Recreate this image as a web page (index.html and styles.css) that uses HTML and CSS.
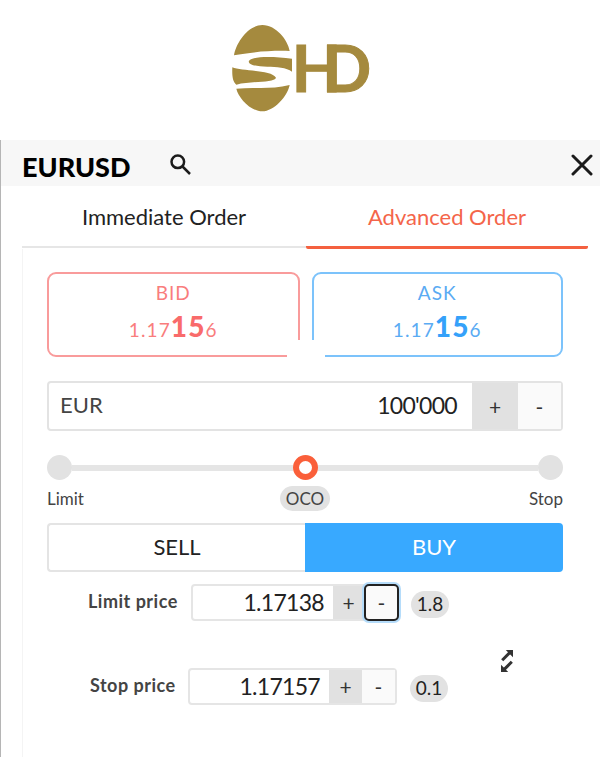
FILE: index.html
```
<!DOCTYPE html>
<html lang="en">
<head>
    <meta charset="UTF-8">
    <meta name="viewport" content="width=device-width, initial-scale=1.0">
    <title>EURUSD - Advanced Order</title>
    <link rel="stylesheet" href="styles.css">
</head>
<body>

    <div class="brand">
        <svg class="logo" viewBox="0 0 480 315" fill="#a58a3e">
            <path d="M42 121 C48 84 84 30 127 30 C169 30 204 76 209 108 C150 106 88 112 42 121Z"/>
            <path d="M86 140 C91 123 155 123 216 131 V170 C200 157 169 155 142 155 C114 155 88 151 86 140Z"/>
            <path d="M37 157 C64 169 154 164 168 188 C163 204 95 197 49 209 C37 201 36 178 37 157Z"/>
            <path d="M49 221 C103 215 152 225 209 210 C203 243 162 289 127 289 C91 289 55 248 49 221Z"/>
            <text class="logo-text" x="215" y="232">HD</text>
        </svg>
    </div>

    <div class="panel">
        <div class="panel-header">
            <h2>EURUSD</h2>
            <svg class="search" viewBox="0 0 22 22">
                <circle cx="7.8" cy="7.8" r="6.3"/>
                <path d="M12.5 12.5 L20 20"/>
            </svg>
            <svg class="close" viewBox="0 0 22 22">
                <path d="M2 2 L20 20 M20 2 L2 20"/>
            </svg>
        </div>

        <div class="tabs">
            <div class="tab"><span>Immediate Order</span></div>
            <div class="tab active"><span>Advanced Order</span></div>
        </div>

        <div class="content">
            <!-- Bid / ask prices -->
            <div class="quotes">
                <div class="quote bid">
                    <div class="side">BID</div>
                    <div class="price">1.17<b>15</b>6</div>
                </div>
                <div class="quote ask">
                    <div class="side">ASK</div>
                    <div class="price">1.17<b>15</b>6</div>
                </div>
                <div class="notch"></div>
            </div>

            <div class="amount">
                <span class="currency">EUR</span>
                <span class="value">100'000</span>
                <button class="plus">+</button>
                <button class="minus">-</button>
            </div>

            <!-- Order type slider -->
            <div class="slider">
                <div class="dot"></div>
                <div class="line"></div>
                <div class="dot selected"></div>
                <div class="line"></div>
                <div class="dot"></div>
            </div>
            <div class="slider-labels">
                <span>Limit</span>
                <span class="pill">OCO</span>
                <span class="right">Stop</span>
            </div>

            <div class="direction">
                <button class="sell">SELL</button>
                <button class="buy">BUY</button>
            </div>

            <div class="price-row limit">
                <label>Limit price</label>
                <div class="stepper">
                    <span class="value">1.17138</span>
                    <button class="plus">+</button>
                    <button class="minus focused">-</button>
                </div>
                <span class="pill">1.8</span>
            </div>

            <div class="swap">
                <svg viewBox="0 0 12 22">
                    <path class="shaft" d="M1.2 10.2 L9 2.4 M10.8 11.8 L3 19.6"/>
                    <path d="M4.8 0 H12 V7.2Z M0 14.8 V22 H7.2Z"/>
                </svg>
            </div>

            <div class="price-row stop">
                <label>Stop price</label>
                <div class="stepper">
                    <span class="value">1.17157</span>
                    <button class="plus">+</button>
                    <button class="minus">-</button>
                </div>
                <span class="pill">0.1</span>
            </div>
        </div>
    </div>

</body>
</html>
```
FILE: styles.css
```
* {
    box-sizing: border-box;
}
body {
    font-family: Lato, "Noto Sans", sans-serif;
    background-color: #fff;
    color: #222;
    margin: 0;
    height: 757px;
    overflow: hidden;
}
button {
    font-family: inherit;
    border: none;
    padding: 0;
    margin: 0;
    cursor: pointer;
}

/* Logo */
.brand {
    height: 140px;
    padding: 15px 0 0 220px;
}
.logo {
    display: block;
    width: 160px;
    height: 105px;
}
.logo-text {
    font-size: 193px;
    font-weight: bold;
    letter-spacing: -57px;
    stroke: #a58a3e;
    stroke-width: 3;
}

/* Panel */
.panel {
    height: 617px;
    border-left: 1px solid #b5b5b5;
}
.panel-header {
    display: flex;
    height: 46px;
    background-color: #f7f7f7;
    padding: 0 7px 0 21px;
}
.panel-header h2 {
    width: 148px;
    margin: 0;
    padding-top: 6px;
    font-size: 27px;
    line-height: 42px;
    font-weight: 900;
    color: #000;
}
.panel-header svg {
    fill: none;
    stroke: #1b1b1b;
}
.search {
    width: 22px;
    height: 22px;
    margin-top: 14px;
    stroke-width: 2.5;
}
.close {
    width: 22px;
    height: 22px;
    margin: 14px 0 0 auto;
    stroke-width: 3;
    stroke-linecap: round;
}

/* Tabs */
.tabs {
    display: flex;
    height: 63px;
    margin: 0 12px 0 21px;
}
.tab {
    width: 284px;
    height: 62px;
    border-bottom: 2px solid #e6e6e6;
    text-align: center;
    font-size: 22px;
    line-height: 62px;
}
.tab.active {
    width: 282px;
    height: 63px;
    color: #f4654a;
    border-bottom: 3px solid #f4603f;
    border-radius: 2px;
}

.content {
    height: 508px;
    margin-left: 21px;
    padding: 23px 37px 0 24px;
    border-left: 1px solid #f4f4f4;
}

/* Quotes */
.quotes {
    position: relative;
    display: flex;
    gap: 12px;
    height: 85px;
}
.quote {
    width: 253px;
    border: 2px solid #f99b9b;
    border-radius: 9px;
    text-align: center;
    color: #f97d7d;
}
.quote.ask {
    width: 252px;
    border-color: #7cc3fb;
    color: #5aabf3;
}
.side {
    margin-top: 7px;
    font-size: 19px;
    line-height: 24px;
    letter-spacing: 1px;
}
.price {
    font-size: 19px;
    line-height: 36px;
    margin-top: 3px;
    letter-spacing: 1.1px;
}
.price b {
    font-size: 28px;
    font-weight: 900;
    color: #f96b6b;
}
.ask .price b {
    color: #35a1fa;
}
/* clears the inner bottom corners of both boxes */
.notch {
    position: absolute;
    left: 240px;
    bottom: -1px;
    width: 38px;
    height: 18px;
    background-color: #fff;
}

/* Amount */
.amount {
    display: flex;
    height: 50px;
    margin-top: 24px;
    border: 2px solid #e3e3e3;
    border-radius: 4px;
    line-height: 44px;
    font-size: 23px;
}
.currency {
    padding-left: 11px;
    font-size: 22px;
    color: #444;
}
.value {
    flex: 1;
    text-align: right;
    padding-right: 15px;
    letter-spacing: -.7px;
}
.plus, .minus {
    width: 46px;
    background-color: #e1e1e1;
    color: #333;
    font-size: 21px;
}
.minus {
    width: 43px;
    background-color: #fafafa;
}

/* Slider */
.slider {
    display: flex;
    align-items: center;
    height: 25px;
    margin-top: 24px;
}
.dot {
    width: 25px;
    height: 25px;
    border-radius: 50%;
    background-color: #e2e2e2;
}
.dot.selected {
    background-color: #fff;
    border: 6px solid #fa5f3a;
}
.line {
    flex: 1;
    height: 6px;
    background-color: #e5e5e5;
}
.slider-labels {
    display: grid;
    grid-template-columns: 1fr 50px 1fr;
    height: 25px;
    margin-top: 6px;
    font-size: 17px;
    line-height: 25px;
    color: #444;
}
.right {
    text-align: right;
}
.pill {
    background-color: #e2e2e2;
    border-radius: 14px;
    text-align: center;
}

/* Sell / buy */
.direction {
    display: flex;
    height: 49px;
    margin-top: 12px;
}
.direction button {
    width: 259px;
    padding-bottom: 2px;
    font-size: 22px;
    background-color: #fff;
    border: 2px solid #e4e4e4;
    border-right: none;
    border-radius: 4px 0 0 4px;
    color: #222;
}
.direction .buy {
    background-color: #38a9ff;
    border: none;
    border-radius: 0 4px 4px 0;
    color: #fff;
}

/* Limit and stop prices */
.price-row {
    display: flex;
    align-items: center;
    height: 37px;
}
.price-row label {
    width: 90px;
    padding-bottom: 3px;
    font-size: 18px;
    letter-spacing: .5px;
    font-weight: bold;
    color: #444;
    white-space: nowrap;
}
.stepper {
    display: flex;
    width: 209px;
    height: 37px;
    border: 2px solid #e5e5e5;
    border-radius: 4px;
    font-size: 23px;
    line-height: 33px;
}
.stepper .value {
    padding-right: 9px;
}
.stepper .plus {
    width: 33px;
}
.stepper .minus {
    width: 33px;
}
.stepper .focused {
    width: 35px;
    height: 37px;
    margin: -2px -2px 0 0;
    border: 2px solid #222;
    border-radius: 5px;
    box-shadow: 0 0 0 2px #b5dcfa;
}
.price-row .pill {
    width: 38px;
    height: 27px;
    margin: 3px 0 0 12px;
    font-size: 19px;
    line-height: 26px;
    color: #222;
}
.limit {
    margin: 12px 0 0 41px;
}
.limit label {
    margin-right: 13px;
}
.limit .stepper {
    width: 208px;
}
.limit .plus {
    width: 31px;
}
.stop {
    margin: -4px 0 0 43px;
}
.stop label {
    margin-right: 8px;
}
.stop .pill {
    margin-left: 13px;
}
.swap {
    height: 51px;
    padding: 29px 0 0 454px;
}
.swap svg {
    display: block;
    width: 12px;
    height: 22px;
    fill: #333;
}
.swap .shaft {
    stroke: #333;
    stroke-width: 3;
}
```
